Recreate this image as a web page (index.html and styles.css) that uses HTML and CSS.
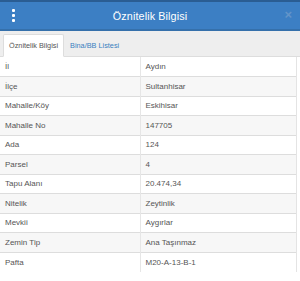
FILE: index.html
```html
<!DOCTYPE html>
<html lang="tr">
<head>
<meta charset="utf-8">
<link rel="stylesheet" href="styles.css">
</head>
<body>
<div class="panel">
  <header class="header">
    <span class="menu"><i></i><i></i><i></i></span>
    <h1 class="title">Öznitelik Bilgisi</h1>
    <span class="close">×</span>
  </header>
  <nav class="tabs">
    <span class="tab active">Öznitelik Bilgisi</span>
    <span class="tab">Bina/BB Listesi</span>
  </nav>
  <div class="content">
    <table class="attrs">
      <tr><td>İl</td><td>Aydın</td></tr>
      <tr><td>İlçe</td><td>Sultanhisar</td></tr>
      <tr><td>Mahalle/Köy</td><td>Eskihisar</td></tr>
      <tr><td>Mahalle No</td><td>147705</td></tr>
      <tr><td>Ada</td><td>124</td></tr>
      <tr><td>Parsel</td><td>4</td></tr>
      <tr><td>Tapu Alanı</td><td>20.474,34</td></tr>
      <tr><td>Nitelik</td><td>Zeytinlik</td></tr>
      <tr><td>Mevkii</td><td>Aygırlar</td></tr>
      <tr><td>Zemin Tip</td><td>Ana Taşınmaz</td></tr>
      <tr><td>Pafta</td><td>M20-A-13-B-1</td></tr>
    </table>
  </div>
</div>
</body>
</html>
```
FILE: styles.css
```css
* { box-sizing: border-box; }
html, body { margin: 0; padding: 0; background: #fff; }
body { font-family: "Liberation Sans", Arial, sans-serif; width: 300px; height: 281px; overflow: hidden; }
.panel { width: 300px; }
.header {
  height: 31px;
  background: #3c7fc4;
  border-top: 2px solid #2a5d93;
  border-bottom: 2px solid #3570ab;
  display: flex;
  align-items: center;
  justify-content: center;
  position: relative;
  color: #fff;
}
.title { margin: 0; font-size: 10.8px; font-weight: normal; letter-spacing: 0.1px; }
.menu {
  position: absolute; left: 12px; top: 7px;
  display: flex; flex-direction: column; gap: 2px;
}
.menu i { display: block; width: 3px; height: 3px; background: #fff; border-radius: 1px; }
.close {
  position: absolute; right: 8px; top: 5px;
  font-size: 13px; color: #6394c8; font-weight: bold;
}
.tabs {
  height: 26px;
  background: #eeeeee;
  border-bottom: 1px solid #dddddd;
  display: flex;
  align-items: flex-end;
  padding-left: 3px;
}
.tab {
  height: 23px;
  display: flex; align-items: center;
  padding: 0 5px;
  font-size: 7.3px;
  color: #3a7fc0;
  margin-bottom: -1px;
  border: 1px solid transparent;
}
.tab.active {
  background: #fff;
  color: #555;
  border-color: #dddddd;
  border-bottom-color: #fff;
  border-radius: 2px 2px 0 0;
}
.content { width: 297px; border-right: 1px solid #e4e4e4; }
.attrs { width: 100%; border-collapse: collapse; font-size: 8px; color: #555; }
.attrs td { height: 19.5px; padding: 0 5px; border-top: 1px solid #dddddd; vertical-align: middle; }
.attrs tr:first-child td { border-top: none; }
.attrs td:first-child { width: 140px; border-right: 1px solid #e6e6e6; }
.attrs tr:nth-child(even) td { background: #f7f7f7; }
```
